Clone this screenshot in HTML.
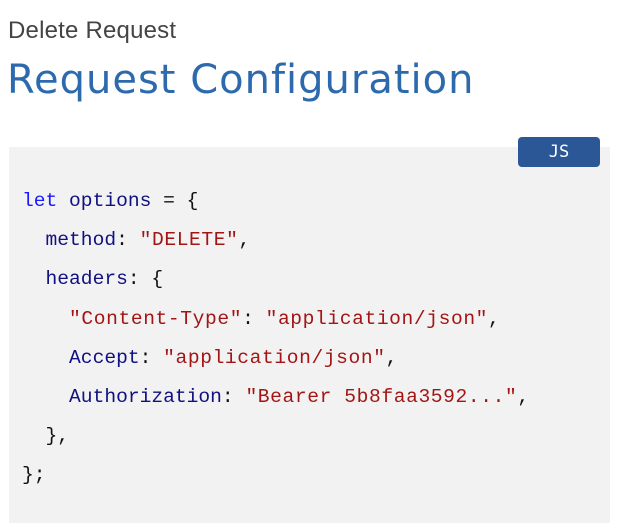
<!DOCTYPE html>
<html><head><meta charset="utf-8"><style>
body{margin:0;background:#fff;width:633px;height:531px;overflow:hidden;position:relative;font-family:"Liberation Sans",sans-serif}
.sub{position:absolute;left:8px;top:17px;font-size:24px;color:#444;letter-spacing:0.2px}
.h{position:absolute;left:7px;top:57px;font-family:"DejaVu Sans",sans-serif;font-size:40px;color:#2d6aad;letter-spacing:1px}
.box{position:absolute;left:9px;top:147px;width:601px;height:376px;background:#f2f2f2}
.js{position:absolute;left:518px;top:137px;width:82px;height:30px;background:#2b5797;border-radius:4px;color:#fff;font-family:"DejaVu Sans Mono",monospace;font-size:17px;line-height:30px;text-align:center}
pre{position:absolute;left:22px;top:182px;margin:0;font-family:"Liberation Mono",monospace;font-size:19.6px;line-height:39.2px;color:#111}
.k{color:#1a1aff}.v{color:#101080}.s{color:#a31515;letter-spacing:0.6px}
</style></head><body>
<div class="sub">Delete Request</div>
<div class="h">Request Configuration</div>
<div class="box"></div>
<div class="js">JS</div>
<pre><span class="k">let</span> <span class="v">options</span> = {
  <span class="v">method</span>: <span class="s">"DELETE"</span>,
  <span class="v">headers</span>: {
    <span class="s">"Content-Type"</span>: <span class="s">"application/json"</span>,
    <span class="v">Accept</span>: <span class="s">"application/json"</span>,
    <span class="v">Authorization</span>: <span class="s">"Bearer 5b8faa3592..."</span>,
  },
};</pre>
</body></html>
